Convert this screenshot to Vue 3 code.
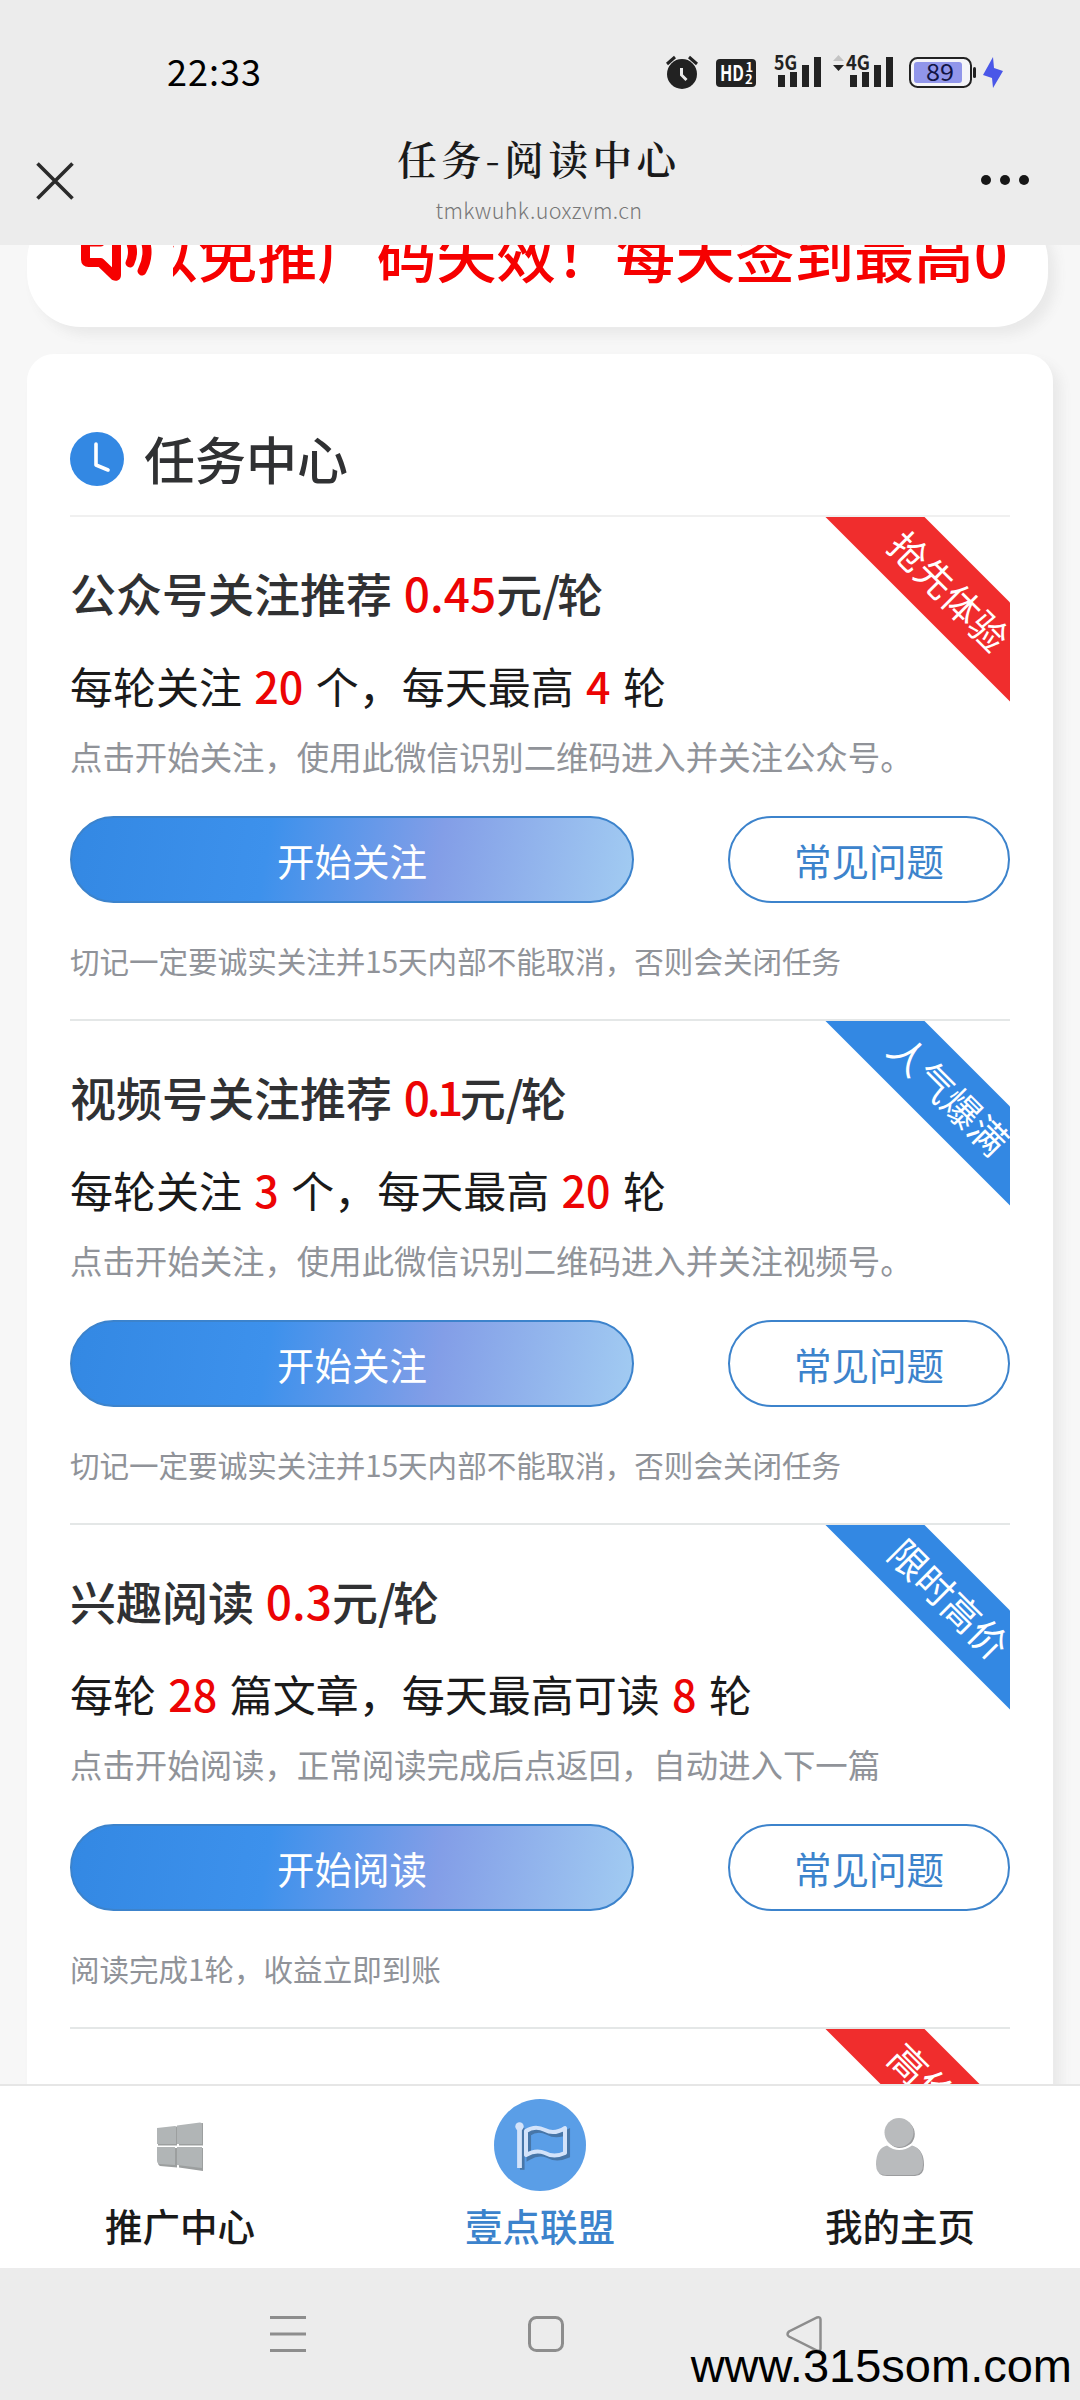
<script setup>
const tasks = [
  {
    title: '公众号关注推荐', price: '0.45', badge: '抢先体验', tone: 'red',
    parts: ['每轮关注', '20', '个，每天最高', '4', '轮'],
    desc: '点击开始关注，使用此微信识别二维码进入并关注公众号。',
    action: '开始关注', note: '切记一定要诚实关注并15天内部不能取消，否则会关闭任务'
  },
  {
    title: '视频号关注推荐', price: '0.1', narrow: true, badge: '人气爆满', tone: 'blue',
    parts: ['每轮关注', '3', '个，每天最高', '20', '轮'],
    desc: '点击开始关注，使用此微信识别二维码进入并关注视频号。',
    action: '开始关注', note: '切记一定要诚实关注并15天内部不能取消，否则会关闭任务'
  },
  {
    title: '兴趣阅读', price: '0.3', badge: '限时高价', tone: 'blue',
    parts: ['每轮', '28', '篇文章，每天最高可读', '8', '轮'],
    desc: '点击开始阅读，正常阅读完成后点返回，自动进入下一篇',
    action: '开始阅读', note: '阅读完成1轮，收益立即到账'
  }
]
</script>

<template>
  <div class="screen">
    <header class="top">
      <div class="status">
        <span class="time">22:33</span>
        <svg class="status-icons" width="350" height="44" viewBox="660 50 350 44">
          <g fill="#222">
            <circle cx="682" cy="74" r="15" />
            <path d="M667 64l8-7M697 64l-8-7" stroke="#222" stroke-width="3" />
            <path d="M681.500 68v7l5 5" fill="none" stroke="#ececec" stroke-width="3" />
            <rect x="716" y="59" width="40" height="28" rx="4" />
            <text x="720" y="81" font-size="21" font-weight="700" fill="#fff" textLength="24" lengthAdjust="spacingAndGlyphs">HD</text>
            <text x="745.500" y="72" font-size="13" font-weight="700" fill="#fff">1</text>
            <text x="745" y="84" font-size="13" font-weight="700" fill="#fff">2</text>
            <text x="774" y="70" font-size="20" font-weight="700" textLength="23" lengthAdjust="spacingAndGlyphs">5G</text>
            <path d="M778 75h7v12h-7zM790 72h7v15h-7zM802 65h7v22h-7zM814 57h7v30h-7z" />
            <path d="M833 61l5.500-6 5.500 6z" fill="#c4c4c4" />
            <path d="M833 65h11l-5.500 6z" />
            <text x="846" y="70" font-size="20" font-weight="700" textLength="24" lengthAdjust="spacingAndGlyphs">4G</text>
            <path d="M850 75h7v12h-7zM862 72h7v15h-7zM874 65h7v22h-7zM886 57h7v30h-7z" />
          </g>
          <rect x="910" y="58" width="61" height="29" rx="7.500" fill="#f4f4f8" stroke="#222" stroke-width="2" />
          <rect x="914" y="62" width="48" height="21" rx="3" fill="#9196ea" />
          <rect x="973" y="67" width="3" height="11" rx="1.500" fill="#222" />
          <text x="926" y="81" font-size="23.500" fill="#111544" textLength="28" lengthAdjust="spacingAndGlyphs">89</text>
          <path d="M993 57l-10 18 9 3 1 10 10-17-9-3z" fill="#4a57e8" />
        </svg>
      </div>
      <div class="navbar">
        <svg class="close" width="38" height="38" viewBox="0 0 38 38">
          <path d="M1.500 1.500l35 35M36.500 1.500l-35 35" stroke="#2b2b2b" stroke-width="3.600" />
        </svg>
        <div class="heading">
          <div class="page-title">任务-阅读中心</div>
          <div class="page-url">tmkwuhk.uoxzvm.cn</div>
        </div>
        <div class="dots"><i></i><i></i><i></i></div>
      </div>
    </header>

    <main class="viewport">
      <section class="notice">
        <svg width="74" height="84" viewBox="79 207 74 84" fill="none" stroke="#f60000" stroke-width="9" stroke-linejoin="round" stroke-linecap="round">
          <path d="M88.500 242q-3 0-3 3v14.500q0 3 3 3h12l14 13.500q2 1 2-1v-46q0-2-2-1l-14 14z" />
          <path d="M130 241q5 11 0 22M142 233q10 19 0 38" />
        </svg>
        <div class="marquee"><span>以免推广码失效！每天签到最高0</span></div>
      </section>

      <section class="card">
        <div class="card-head">
          <svg width="54" height="54" viewBox="0 0 54 54">
            <circle cx="27" cy="27" r="27" fill="#3388e3" />
            <path d="M26 12v21l12 5" fill="none" stroke="#fff" stroke-width="3.600" stroke-linecap="round" stroke-linejoin="round" />
          </svg>
          <h2>任务中心</h2>
        </div>

        <article v-for="t in tasks" :key="t.title" class="task">
          <div class="corner"><div class="ribbon" :class="t.tone">{{ t.badge }}</div></div>
          <h3>{{ t.title }} <em :class="{ narrow: t.narrow }">{{ t.price }}</em>元<span class="slash">/</span>轮</h3>
          <p class="quota">{{ t.parts[0] }} <em>{{ t.parts[1] }}</em> {{ t.parts[2] }} <em>{{ t.parts[3] }}</em> {{ t.parts[4] }}</p>
          <p class="desc">{{ t.desc }}</p>
          <div class="actions">
            <button class="primary">{{ t.action }}</button>
            <button class="plain">常见问题</button>
          </div>
          <p class="note">{{ t.note }}</p>
        </article>
        <article class="task">
          <div class="corner"><div class="ribbon red">高价阅读</div></div>
        </article>
      </section>
    </main>

    <nav class="tabs">
      <a class="tab">
        <span class="icon">
          <svg class="lowered" width="48" height="49" viewBox="0 0 48 49">
            <g fill="#9c9f9f" transform="translate(1 1)">
              <path d="M1 6l19-2.500v19H1zM22 3l24-3v22.500H22zM1 25h19v19.500L3 43q-2-1-2-3zM22 25h24v23l-24-3.500z" />
            </g>
            <path fill="#b1b5b6" d="M1 6l18-2q1 0 1 1v17H1zM21 3.500L44 .5q2 0 2 2V22H21zM1 25h18v18L3 42q-2-1-2-3zM21 25h25v21l-25-3z" />
          </svg>
        </span>
        <span>推广中心</span>
      </a>
      <a class="tab active">
        <span class="icon">
          <svg width="92" height="92" viewBox="494 2099 92 92">
            <circle cx="540" cy="2145" r="46" fill="#5a9ee7" />
            <g fill="none" stroke="#4776a8" stroke-width="4.500" transform="translate(2.800 2.800)">
              <path d="M519.500 2125v42" />
              <path d="M526 2131q9-6 19-1 9 5 20-1v24q-11 5-20 0-9-4-19 2z" />
            </g>
            <g fill="none" stroke="#d3e3fa" stroke-width="4">
              <path d="M519.500 2125v43" stroke-width="4.800" />
              <path d="M526 2131q9-6 19-1 9 5 20-2v25q-11 5-20 0-9-4-19 2z" stroke-linejoin="round" />
            </g>
            <circle cx="519.500" cy="2126.500" r="4.200" fill="#d3e3fa" />
          </svg>
        </span>
        <span>壹点联盟</span>
      </a>
      <a class="tab">
        <span class="icon">
          <svg class="lowered" width="50" height="60" viewBox="0 0 50 60">
            <g fill="#9b9c9e" transform="translate(1 1)">
              <circle cx="24.500" cy="16" r="14.300" />
              <path d="M13 28q11 9 23 0 12 3 12 19 0 11-9 11H11Q1 58 1 48q0-17 12-20z" />
            </g>
            <path d="M12 28q12 9 25 0" fill="none" stroke="#fff" stroke-width="3" />
            <circle cx="24" cy="15.500" r="14.500" fill="#b9bbbd" />
            <path fill="#b9bbbd" d="M12 28.500q12 9 25 0 11 3 11 19 0 10.500-9 10.500H10Q1 58 1 47.500q0-16 11-19z" />
          </svg>
        </span>
        <span>我的主页</span>
      </a>
    </nav>

    <footer class="sysnav">
      <svg width="1080" height="132" viewBox="0 2268 1080 132" fill="none" stroke="#8d8d8d" stroke-width="3">
        <path d="M270 2317.500h36M270 2334h36M270 2350.500h36" />
        <rect x="529.500" y="2317.500" width="33" height="33" rx="7" />
        <path d="M817 2317.500q3.500-1 3.500 2v29q0 3-3.500 2l-28-14q-3-2 0-5z" stroke-width="2.500" />
      </svg>
      <span class="watermark">www.315som.com</span>
    </footer>
  </div>
</template>

<style>
body { margin: 0; }
</style>

<style scoped>
.screen {
  width: 1080px;
  height: 2400px;
  display: flex;
  flex-direction: column;
  overflow: hidden;
  background: #f7f7f7;
  font-family: "Noto Sans CJK SC", sans-serif;
  color: #1a1a1a;
}
.top { height: 245px; flex: none; background: #ececec; }
.status {
  height: 94px;
  padding: 50px 70px 0 167px;
  box-sizing: border-box;
  display: flex;
  justify-content: space-between;
}
.time { font-size: 36px; line-height: 40px; letter-spacing: 1px; color: #000; }
.status-icons { overflow: visible; }
.status-icons text { font-family: "Noto Sans CJK SC", sans-serif; }
.navbar {
  height: 151px;
  padding: 0 51px 0 36px;
  box-sizing: border-box;
  display: flex;
  justify-content: space-between;
}
.close { margin-top: 68px; }
.heading { text-align: center; padding: 36px 0 0 23px; }
.page-title {
  font-family: "Noto Serif CJK SC", "Noto Sans CJK SC", serif;
  font-size: 39.500px;
  font-weight: 600;
  line-height: 56px;
  letter-spacing: 4.600px;
}
.page-url { font-size: 21.500px; font-weight: 300; line-height: 30px; margin-top: 9px; letter-spacing: .4px; color: #777; }
.dots { display: flex; gap: 9px; margin-top: 81px; height: 10px; }
.dots i { width: 10px; height: 10px; border-radius: 50%; background: #171717; }

.viewport { flex: 1; min-height: 0; overflow: hidden; }
.notice {
  height: 120px;
  margin: -38px 32px 27px 27px;
  padding-left: 52px;
  box-sizing: border-box;
  display: flex;
  background: #fff;
  border-radius: 54px;
  box-shadow: 8px 8px 12px #e9e9e9;
}
.marquee { width: 838px; margin-left: 20px; height: 96px; overflow: hidden; }
.marquee span {
  display: block;
  margin-left: -35px;
  white-space: nowrap;
  font-size: 59.700px;
  font-weight: 500;
  line-height: 91px;
  color: #f60000;
}
.card {
  margin: 0 27px;
  padding: 0 43px;
  height: 1900px;
  background: #fff;
  border-radius: 27px;
  box-shadow: 8px 8px 12px #e9e9e9;
}
.card-head {
  padding-top: 49px;
  height: 112px;
  display: flex;
  align-items: center;
  gap: 20px;
  border-bottom: 2px solid #f0f0f0;
}
h2 { margin: -2px 0 0; font-size: 51px; font-weight: 500; line-height: 76px; color: #303133; }
.task {
  position: relative;
  padding-top: 45px;
  height: 457px;
  border-bottom: 2px solid #e4e7e7;
}
h3, p { margin: 0; white-space: nowrap; }
em { font-style: normal; font-weight: 500; color: #ec0404; }
h3 { font-size: 46px; font-weight: 500; line-height: 60px; word-spacing: 1.500px; color: #303133; }
.narrow { letter-spacing: -3.400px; }
.slash { letter-spacing: -3px; }
.quota { margin-top: 33px; font-size: 43px; line-height: 60px; word-spacing: 2.700px; }
.desc { margin-top: 19px; font-size: 32.420px; line-height: 44px; color: #909399; }
.note { margin-top: 35px; font-size: 29.540px; line-height: 45px; color: #909399; }
.actions { display: flex; justify-content: space-between; margin-top: 38px; }
button {
  height: 87px;
  padding: 0;
  box-sizing: border-box;
  border: 2px solid #3c83cc;
  border-radius: 44px;
  font: 400 37.500px/84px "Noto Sans CJK SC", sans-serif;
}
.primary {
  width: 564px;
  color: #fff;
  background: linear-gradient(100deg, #3388e3 0%, #3d91ec 35%, #839ee7 65%, #a2ccf2 100%) border-box;
}
.plain { width: 282px; color: #3c83cc; background: #fff; }
.corner { position: absolute; top: 0; right: 0; width: 200px; height: 200px; overflow: hidden; }
.ribbon {
  position: absolute;
  top: 33px;
  left: -17px;
  width: 300px;
  height: 70px;
  padding-left: 17px;
  box-sizing: border-box;
  line-height: 68px;
  text-align: center;
  font-size: 37.500px;
  color: #fff;
  transform: rotate(45deg);
}
.red { background: #f02d2d; }
.blue { background: #3388e3; }

.tabs {
  flex: none;
  height: 184px;
  box-sizing: border-box;
  border-top: 2px solid #e6e6e6;
  display: flex;
  background: #fff;
}
.tab {
  flex: 1;
  display: flex;
  flex-direction: column;
  align-items: center;
  font-size: 37.500px;
  font-weight: 500;
  line-height: 50px;
}
.icon { height: 92px; margin: 13px 0 9px; display: flex; align-items: center; }
.lowered { margin-top: 3px; }
.active { color: #3c83cc; }
.sysnav { position: relative; flex: none; height: 132px; background: #ececec; }
.sysnav svg { display: block; }
.watermark {
  position: absolute;
  right: 8px;
  bottom: 7px;
  font-family: "Liberation Sans", sans-serif;
  font-size: 47px;
  line-height: 54px;
  color: #000;
}
</style>
